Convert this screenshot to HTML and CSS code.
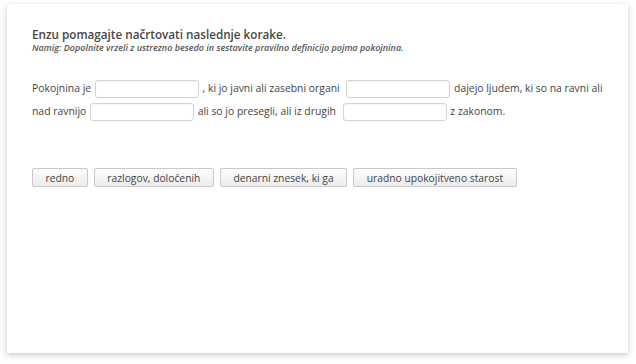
FILE: index.html
```html
<!DOCTYPE html>
<html lang="sl">
  <head>
    <meta charset="UTF-8" />
    <title>Pokojnina</title>
    <link rel="stylesheet" href="styles.css">
  </head>
  <body>
    <div class="card">
      <h1 class="title">Enzu pomagajte načrtovati naslednje korake.</h1>
      <p class="hint">Namig: Dopolnite vrzeli z ustrezno besedo in sestavite pravilno definicijo pojma pokojnina.</p>

      <p class="gap-text">
        Pokojnina je <span class="gap"></span> , ki jo javni ali zasebni organi
        <span class="gap gap-wide"></span> dajejo ljudem, ki so na ravni ali
        nad ravnijo <span class="gap"></span> ali so jo presegli, ali iz drugih
        <span class="gap gap-wide"></span> z zakonom.
      </p>

      <div class="choices">
        <button class="choice">redno</button>
        <button class="choice">razlogov, določenih</button>
        <button class="choice">denarni znesek, ki ga</button>
        <button class="choice">uradno upokojitveno starost</button>
      </div>
    </div>
  </body>
</html>
```

FILE: styles.css
```css
/* Page */
body {
  margin: 0;
  padding: 4px 8px 11px 7px;
  background: #fff;
  font-family: "Open Sans", sans-serif;
  color: #444;
}

/* Card with soft shadow */
.card {
  background: #fff;
  height: 349px;
  box-sizing: border-box;
  padding: 22px 16px 0 25px;
  box-shadow: 0 2px 6px rgba(0, 0, 0, 0.22);
}

.title {
  margin: 0;
  font-size: 11.7px;
  font-weight: 600;
  line-height: 16px;
  color: #474747;
}

.hint {
  margin: 0;
  font-size: 9px;
  font-style: italic;
  font-weight: 600;
  line-height: 12px;
  color: #555;
}

/* Fill-in text */
.gap-text {
  margin: 23px 0 0;
  font-size: 10.4px;
  line-height: 23px;
  color: #444;
}

.gap {
  display: inline-block;
  width: 102px;
  height: 16px;
  margin: 0 1px;
  border: 1px solid #d3d3d3;
  border-radius: 3px;
  background: #fff;
  vertical-align: middle;
  box-shadow: inset 0 1px 1px rgba(0, 0, 0, 0.04);
}

.gap-wide {
  margin-left: 4px;
}

/* Answer buttons */
.choices {
  display: flex;
  gap: 6px;
  margin-top: 45px;
}

.choice {
  font-family: "Open Sans", sans-serif;
  font-size: 10.3px;
  color: #444;
  padding: 0 12.5px;
  height: 19px;
  border: 1px solid #c9c9c9;
  border-radius: 2px;
  background: linear-gradient(#fdfdfd, #ececec);
  cursor: pointer;
}
```
